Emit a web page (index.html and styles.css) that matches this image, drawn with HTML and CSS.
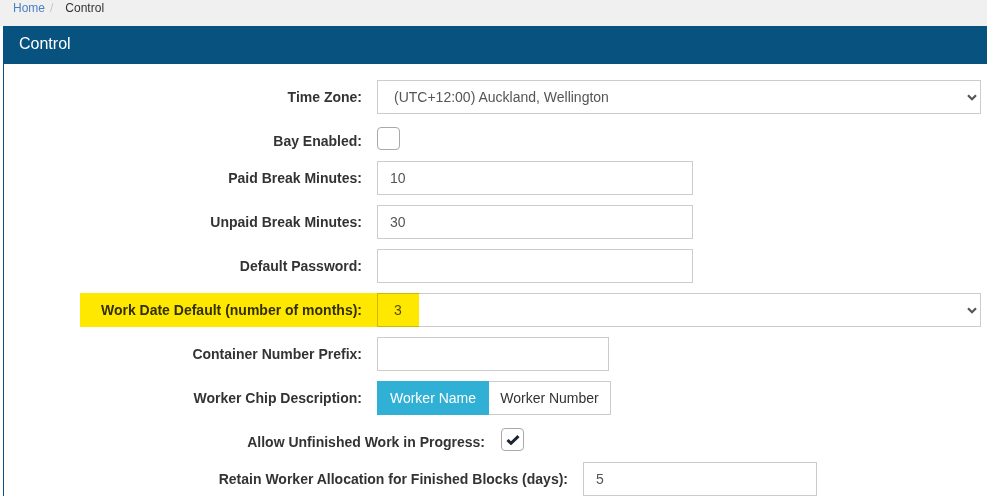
FILE: index.html
```html
<!DOCTYPE html>
<html>
<head>
<meta charset="utf-8">
<title>Control</title>
<link rel="stylesheet" href="styles.css">
</head>
<body>
<nav class="crumbs">
  <a class="crumb-link" href="#">Home</a><span class="crumb-sep">/</span><span class="crumb-current">Control</span>
</nav>
<section class="panel">
  <header class="panel-head">Control</header>
  <form class="panel-body">
    <div class="row">
      <label class="lbl">Time Zone:</label>
      <div class="select-wrap select-wide">
        <select class="ctl select"><option>(UTC+12:00) Auckland, Wellington</option></select>
        <svg class="chev" width="10" height="7" viewBox="0 0 10 7"><path d="M1 1.2 L5 5.2 L9 1.2" fill="none" stroke="#555" stroke-width="2.2"/></svg>
      </div>
    </div>
    <div class="row row-check">
      <label class="lbl">Bay Enabled:</label>
      <span class="check"></span>
    </div>
    <div class="row">
      <label class="lbl">Paid Break Minutes:</label>
      <input class="ctl input w-316" type="text" value="10">
    </div>
    <div class="row">
      <label class="lbl">Unpaid Break Minutes:</label>
      <input class="ctl input w-316" type="text" value="30">
    </div>
    <div class="row">
      <label class="lbl">Default Password:</label>
      <input class="ctl input w-316" type="password" value="">
    </div>
    <div class="row row-marked">
      <span class="highlight"></span>
      <label class="lbl">Work Date Default (number of months):</label>
      <div class="select-wrap select-wide">
        <select class="ctl select"><option>3</option></select>
        <svg class="chev" width="10" height="7" viewBox="0 0 10 7"><path d="M1 1.2 L5 5.2 L9 1.2" fill="none" stroke="#555" stroke-width="2.2"/></svg>
      </div>
    </div>
    <div class="row">
      <label class="lbl">Container Number Prefix:</label>
      <input class="ctl input w-232" type="text" value="">
    </div>
    <div class="row">
      <label class="lbl">Worker Chip Description:</label>
      <div class="btn-group">
        <button type="button" class="btn btn-active">Worker Name</button><button type="button" class="btn btn-plain">Worker Number</button>
      </div>
    </div>
    <div class="row row-check">
      <label class="lbl lbl-mid">Allow Unfinished Work in Progress:</label>
      <span class="check">
        <svg width="14" height="10" viewBox="0 0 14 10"><path d="M1.5 5 L5 8.3 L12.5 1.2" fill="none" stroke="#1d2433" stroke-width="3"/></svg>
      </span>
    </div>
    <div class="row">
      <label class="lbl lbl-wide">Retain Worker Allocation for Finished Blocks (days):</label>
      <input class="ctl input w-234" type="text" value="5">
    </div>
  </form>
</section>
</body>
</html>
```
FILE: styles.css
```css
* { box-sizing: border-box; }

html, body {
  margin: 0;
  background: #ffffff;
  font-family: "Liberation Sans", Arial, sans-serif;
  font-size: 14px;
  color: #333333;
  overflow: hidden;
}

.crumbs {
  height: 26px;
  background: #f0f0f0;
  padding: 0 0 0 13px;
  font-size: 12px;
  line-height: 17px;
  display: flex;
  align-items: flex-start;
}
.crumb-link { color: #4a80c2; text-decoration: none; }
.crumb-sep { color: #c8c8c8; margin: 0 12px 0 5px; }
.crumb-current { color: #333333; }

.panel {
  margin-left: 3px;
  border-left: 1px solid #07527f;
}

.panel-head {
  height: 38px;
  background: #07527f;
  color: #ffffff;
  font-size: 16px;
  line-height: 18px;
  padding: 9px 15px 0;
}

.panel-body {
  padding-top: 16px;
  display: flex;
  flex-direction: column;
  gap: 10px;
}

.row {
  display: flex;
  align-items: flex-start;
  height: 34px;
  position: relative;
}
.row-check { height: 27px; }

.lbl {
  flex: none;
  width: 373px;
  padding: 7px 15px 0 0;
  line-height: 20px;
  text-align: right;
  font-weight: bold;
  color: #333333;
  white-space: nowrap;
  position: relative;
}
.lbl-mid { width: 497px; padding-right: 16px; }
.lbl-wide { width: 579px; }

.ctl {
  height: 34px;
  border: 1px solid #cccccc;
  border-radius: 0;
  background: #ffffff;
  font-family: "Liberation Sans", Arial, sans-serif;
  font-size: 14px;
  color: #555555;
  padding: 6px 12px;
  outline: none;
}
.w-316 { width: 316px; }
.w-232 { width: 232px; }
.w-234 { width: 234px; }

.select-wrap { position: relative; height: 34px; }
.select-wide { width: 604px; }
.select {
  width: 100%;
  -webkit-appearance: none;
  appearance: none;
  padding-left: 16px;
}
.chev {
  position: absolute;
  right: 4px;
  top: 14px;
}

.check {
  margin-top: 3px;
  width: 23px;
  height: 23px;
  border: 1px solid #a9a9a9;
  border-radius: 4px;
  background: #ffffff;
  display: flex;
  align-items: center;
  justify-content: center;
  padding-top: 1px;
}

.btn-group { display: flex; height: 34px; }
.btn {
  height: 34px;
  margin: 0;
  padding: 0;
  font-family: "Liberation Sans", Arial, sans-serif;
  font-size: 14px;
  line-height: 20px;
  white-space: nowrap;
  text-align: center;
  color: #333333;
  background: #ffffff;
  border: 1px solid #cccccc;
  border-radius: 0;
}
.btn-active {
  width: 112px;
  background: #31b0d5;
  border-color: #31b0d5;
  color: #ffffff;
}
.btn-plain { border-left: 0; width: 122px; }

.highlight {
  position: absolute;
  left: 76px;
  top: 0;
  width: 339px;
  height: 34px;
  background: #ffe800;
  mix-blend-mode: multiply;
  z-index: 2;
  pointer-events: none;
}
```
